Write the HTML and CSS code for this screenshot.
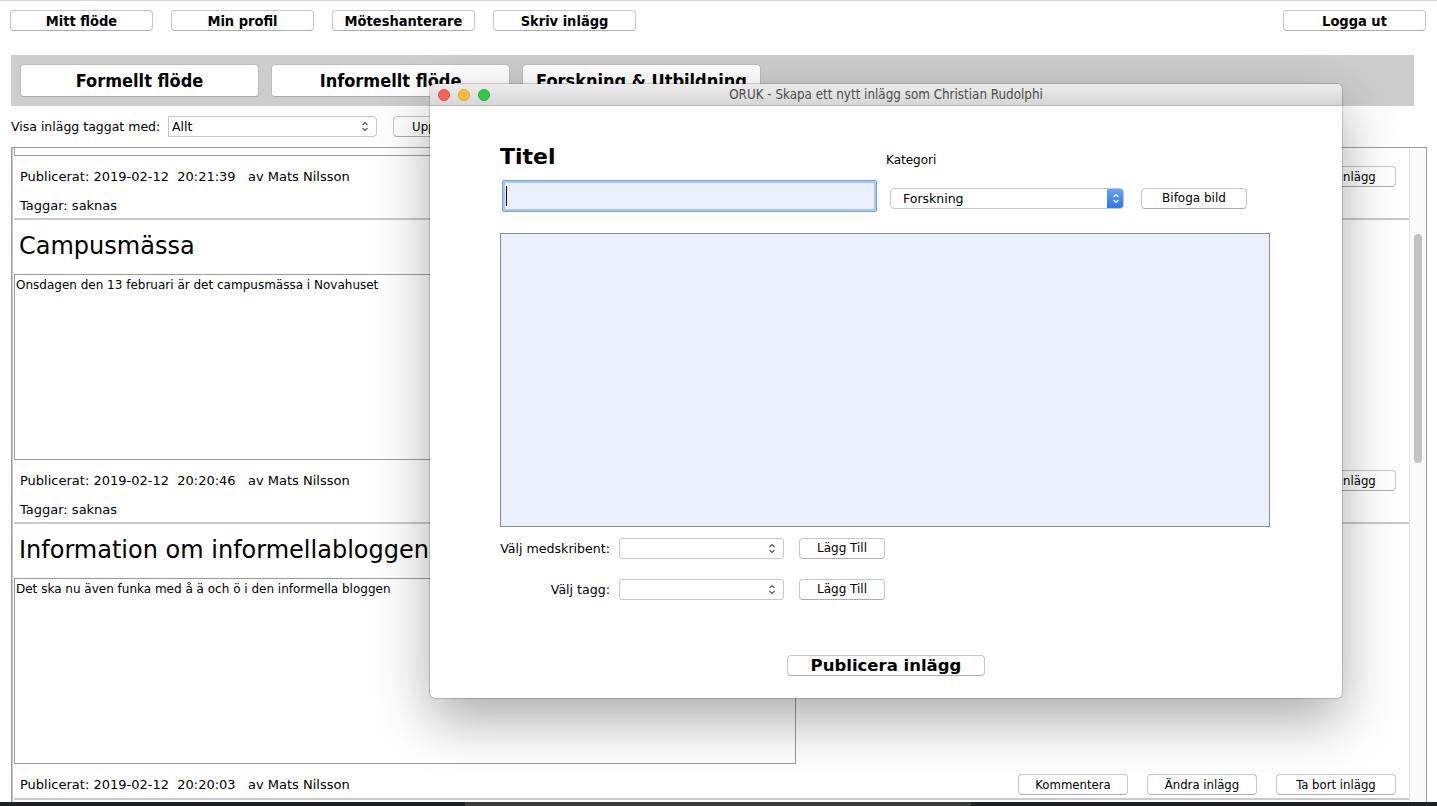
FILE: index.html
```html
<!DOCTYPE html>
<html lang="sv">
<head>
  <meta charset="UTF-8">
  <title>ORUK</title>
  <link rel="stylesheet" href="styles.css">
</head>
<body>
  <div class="screen">
    <div class="app">
      <nav class="topnav">
        <button class="navbtn">Mitt flöde</button>
        <button class="navbtn">Min profil</button>
        <button class="navbtn">Möteshanterare</button>
        <button class="navbtn">Skriv inlägg</button>
        <button class="navbtn logout">Logga ut</button>
      </nav>

      <div class="tabbar">
        <button class="tab">Formellt flöde</button>
        <button class="tab">Informellt flöde</button>
        <button class="tab">Forskning &amp; Utbildning</button>
      </div>

      <div class="filter">
        <span class="filter-label">Visa inlägg taggat med:</span>
        <div class="combo combo-filter">
          <span>Allt</span>
          <svg class="updown" width="8" height="11" viewBox="0 0 8 11"><path d="M1.5 4 L4 1.5 L6.5 4 M1.5 7 L4 9.5 L6.5 7" /></svg>
        </div>
        <button class="btn btn-refresh">Uppdatera</button>
      </div>

      <div class="pane">
        <div class="feed">
          <!-- första inlägget är bortskrollat, bara slutet syns -->
          <article class="post">
            <div class="post-title"></div>
            <div class="post-text"></div>
            <div class="post-meta">
              <div class="meta-line">
                <span class="meta-text">Publicerat: 2019-02-12  20:21:39   av Mats Nilsson</span>
                <div class="actions">
                  <button class="btn btn-comment">Kommentera</button>
                  <button class="btn btn-edit">Ändra inlägg</button>
                  <button class="btn btn-delete">Ta bort inlägg</button>
                </div>
              </div>
              <div class="tags">Taggar: saknas</div>
            </div>
          </article>

          <article class="post">
            <h2 class="post-title">Campusmässa</h2>
            <div class="post-text">Onsdagen den 13 februari är det campusmässa i Novahuset</div>
            <div class="post-meta">
              <div class="meta-line">
                <span class="meta-text">Publicerat: 2019-02-12  20:20:46   av Mats Nilsson</span>
                <div class="actions">
                  <button class="btn btn-comment">Kommentera</button>
                  <button class="btn btn-edit">Ändra inlägg</button>
                  <button class="btn btn-delete">Ta bort inlägg</button>
                </div>
              </div>
              <div class="tags">Taggar: saknas</div>
            </div>
          </article>

          <article class="post">
            <h2 class="post-title">Information om informellabloggen</h2>
            <div class="post-text">Det ska nu även funka med å ä och ö i den informella bloggen</div>
            <div class="post-meta">
              <div class="meta-line">
                <span class="meta-text">Publicerat: 2019-02-12  20:20:03   av Mats Nilsson</span>
                <div class="actions">
                  <button class="btn btn-comment">Kommentera</button>
                  <button class="btn btn-edit">Ändra inlägg</button>
                  <button class="btn btn-delete">Ta bort inlägg</button>
                </div>
              </div>
            </div>
          </article>
        </div>
        <div class="scrollbar"><div class="thumb"></div></div>
      </div>
    </div>

    <div class="dock"><div class="dock-mid"></div></div>

    <!-- fönstret "Skriv inlägg" ligger över huvudfönstret -->
    <div class="dialog">
      <div class="titlebar">
        <div class="lights">
          <span class="light red"></span>
          <span class="light yellow"></span>
          <span class="light green"></span>
        </div>
        <span class="titlebar-text">ORUK - Skapa ett nytt inlägg som Christian Rudolphi</span>
      </div>

      <div class="dlg-body">
        <div class="dlg-head">
          <div class="col-title">
            <h1 class="dlg-h1">Titel</h1>
            <div class="title-input"><span class="caret"></span></div>
          </div>
          <div class="col-kat">
            <div class="kat-label">Kategori</div>
            <div class="kat-row">
              <div class="combo combo-kat">
                <span>Forskning</span>
                <span class="stepper">
                  <svg width="8" height="11" viewBox="0 0 8 11"><path d="M1.5 4 L4 1.5 L6.5 4 M1.5 7 L4 9.5 L6.5 7" /></svg>
                </span>
              </div>
              <button class="btn btn-lucida btn-attach">Bifoga bild</button>
            </div>
          </div>
        </div>

        <div class="dlg-text"></div>

        <div class="form-row">
          <span class="form-label">Välj medskribent:</span>
          <div class="combo combo-small">
            <span></span>
            <svg class="updown" width="8" height="11" viewBox="0 0 8 11"><path d="M1.5 4 L4 1.5 L6.5 4 M1.5 7 L4 9.5 L6.5 7" /></svg>
          </div>
          <button class="btn btn-lucida btn-add">Lägg Till</button>
        </div>
        <div class="form-row">
          <span class="form-label">Välj tagg:</span>
          <div class="combo combo-small">
            <span></span>
            <svg class="updown" width="8" height="11" viewBox="0 0 8 11"><path d="M1.5 4 L4 1.5 L6.5 4 M1.5 7 L4 9.5 L6.5 7" /></svg>
          </div>
          <button class="btn btn-lucida btn-add">Lägg Till</button>
        </div>

        <div class="publish-row">
          <button class="btn btn-publish">Publicera inlägg</button>
        </div>
      </div>
    </div>
  </div>
</body>
</html>
```

FILE: styles.css
```css
body {
  margin: 0;
  background: #fff;
  color: #000;
  font-family: 'DejaVu Sans', 'Noto Sans', sans-serif;
  overflow: hidden;
}

.screen {
  position: relative;
  width: 1437px;
  height: 806px;
  display: flex;
  flex-direction: column;
  border-top: 1px solid #d6d6d6;
  box-sizing: border-box;
}

.app {
  flex: 1;
  min-height: 0;
  display: flex;
  flex-direction: column;
}

/* knappar */
.btn, .navbtn, .tab {
  background: #fff;
  border: 1px solid #c6c6c6;
  border-bottom-color: #adadad;
  border-radius: 4px;
  padding: 0;
  color: #000;
  font-family: 'DejaVu Sans Condensed', 'DejaVu Sans', sans-serif;
  font-stretch: condensed;
  cursor: pointer;
}

.btn {
  height: 21px;
  font-size: 13px;
  line-height: 19px;
}

.btn-lucida {
  font-family: 'DejaVu Sans', sans-serif;
  font-stretch: normal;
  font-size: 12px;
}

.topnav {
  display: flex;
  gap: 18px;
  padding: 9px 11px 0 10px;
}

.navbtn {
  width: 143px;
  height: 21px;
  font-size: 14.5px;
  font-weight: bold;
  line-height: 20px;
}

.logout {
  margin-left: auto;
}

.tabbar {
  margin: 24px 23px 0 11px;
  height: 51px;
  box-sizing: border-box;
  background: #cdcdcd;
  padding: 9px;
  display: flex;
  gap: 12px;
}

.tab {
  width: 239px;
  height: 33px;
  font-size: 18px;
  font-weight: bold;
  border-color: #bdbdbd;
  border-bottom-color: #a9a9a9;
}

/* filterrad */
.filter {
  display: flex;
  align-items: center;
  margin: 10px 0 0 11px;
  height: 21px;
}

.filter-label {
  font-size: 12.5px;
  width: 157px;
}

.combo {
  display: flex;
  align-items: center;
  justify-content: space-between;
  background: #fff;
  border: 1px solid #c8c8c8;
  border-radius: 3px;
  box-sizing: border-box;
  font-size: 12.5px;
}

.updown path, .stepper path {
  fill: none;
  stroke: #555;
  stroke-width: 1.2;
}

.combo-filter {
  width: 209px;
  height: 21px;
  padding: 0 7px 0 3px;
  border-radius: 0 4px 4px 0;
}

.btn-refresh {
  margin-left: 16px;
  width: 100px;
}

/* inläggslista */
.pane {
  flex: 1;
  min-height: 0;
  margin: 10px 10px 0 11px;
  border: 1px solid #9d9d9d;
  border-bottom: none;
  display: flex;
  overflow: hidden;
}

.feed {
  flex: 1;
  min-width: 0;
  overflow: hidden;
  border-left: 1px solid #c8c8c8;
  padding-left: 1px;
}

.post:first-child {
  margin-top: -232px;
}

.post {
  border-bottom: 2px solid #c9c9c9;
}

.post-title {
  margin: 0;
  height: 54px;
  line-height: 52px;
  padding-left: 5px;
  font-size: 24px;
  font-weight: normal;
  white-space: nowrap;
  overflow: hidden;
}

.post-text {
  width: 782px;
  height: 186px;
  box-sizing: border-box;
  border: 1px solid #9a9a9a;
  padding: 3px 1px;
  font-size: 12px;
}

.post-meta {
  padding: 10px 13px 3px 6px;
}

.meta-line {
  display: flex;
  align-items: center;
  justify-content: space-between;
  height: 21px;
}

.meta-text, .tags {
  font-size: 13px;
  white-space: pre;
}

.tags {
  margin-top: 10px;
  height: 18px;
  line-height: 18px;
}

.actions {
  display: flex;
  gap: 19px;
}

.btn-comment, .btn-edit {
  width: 110px;
}

.btn-delete {
  width: 120px;
}

.scrollbar {
  width: 17px;
  background: #fafafa;
  border-left: 1px solid #e4e4e4;
  padding-top: 86px;
  box-sizing: border-box;
}

.thumb {
  width: 8px;
  height: 229px;
  margin-left: 4px;
  border-radius: 4px;
  background: #c2c2c2;
}

.dock {
  height: 4px;
  background: #1d2225;
  display: flex;
  padding-left: 465px;
}

.dock-mid {
  width: 506px;
  background: #3a3a3a;
}

/* dialogfönster */
.dialog {
  position: absolute;
  left: 430px;
  top: 83px;
  width: 912px;
  height: 614px;
  background: #fff;
  border-radius: 5px;
  overflow: hidden;
  box-shadow: 0 22px 55px rgba(0, 0, 0, 0.33), 0 0 0 1px rgba(0, 0, 0, 0.16);
}

.titlebar {
  position: relative;
  height: 22px;
  box-sizing: border-box;
  background: linear-gradient(#ececec, #d6d6d6);
  border-bottom: 1px solid #b8b8b8;
  display: flex;
  align-items: center;
  justify-content: center;
}

.lights {
  position: absolute;
  left: 8px;
  top: 5px;
  display: flex;
  gap: 8px;
}

.light {
  width: 12px;
  height: 12px;
  box-sizing: border-box;
  border-radius: 50%;
}

.red { background: #fc605b; border: 1px solid #de4b45; }
.yellow { background: #fdbc40; border: 1px solid #dea034; }
.green { background: #34c84a; border: 1px solid #27aa35; }

.titlebar-text {
  font-family: 'DejaVu Sans Condensed', 'DejaVu Sans', sans-serif;
  font-stretch: condensed;
  font-size: 13.3px;
  color: #4d4d4d;
}

.dlg-body {
  padding: 37px 0 0 70px;
}

.dlg-head {
  display: flex;
}

.col-title {
  width: 378px;
}

.dlg-h1 {
  margin: 0;
  font-size: 22px;
  line-height: 28px;
  font-weight: bold;
}

.title-input {
  margin: 9px 0 0 2px;
  width: 375px;
  height: 32px;
  box-sizing: border-box;
  background: #eaf1fc;
  border: 1px solid #6ea3ea;
  box-shadow: inset 0 0 0 2px #a8c8f3;
  border-radius: 2px;
  display: flex;
  align-items: center;
  padding-left: 3px;
}

.caret {
  width: 1px;
  height: 20px;
  background: #000;
}

.col-kat {
  margin-left: 8px;
  padding-top: 9px;
}

.kat-label {
  font-size: 12px;
  line-height: 16px;
}

.kat-row {
  display: flex;
  margin: 20px 0 0 4px;
}

.combo-kat {
  width: 234px;
  height: 21px;
  padding-left: 12px;
  font-size: 12.5px;
  border-radius: 4px;
  overflow: hidden;
}

.stepper {
  width: 17px;
  height: 21px;
  margin-top: -1px;
  margin-right: -1px;
  background: linear-gradient(#63a6fa, #2a74ee);
  display: flex;
  align-items: center;
  justify-content: center;
}

.stepper path {
  stroke: #fff;
}

.btn-attach {
  width: 106px;
  margin-left: 17px;
}

.dlg-text {
  margin-top: 21px;
  width: 770px;
  height: 294px;
  box-sizing: border-box;
  background: #ebf1fc;
  border: 1px solid #8c8c8c;
}

.form-row {
  display: flex;
  align-items: center;
  height: 21px;
  margin-top: 11px;
}

.form-row + .form-row {
  margin-top: 20px;
}

.form-label {
  width: 110px;
  text-align: right;
  font-size: 12.6px;
}

.combo-small {
  width: 165px;
  height: 21px;
  margin-left: 9px;
  padding-right: 7px;
}

.btn-add {
  width: 86px;
  margin-left: 15px;
}

.publish-row {
  margin: 55px 0 0 -70px;
  display: flex;
  justify-content: center;
}

.btn-publish {
  width: 198px;
  font-family: 'DejaVu Sans', sans-serif;
  font-stretch: normal;
  font-size: 16.5px;
  font-weight: bold;
}
```
